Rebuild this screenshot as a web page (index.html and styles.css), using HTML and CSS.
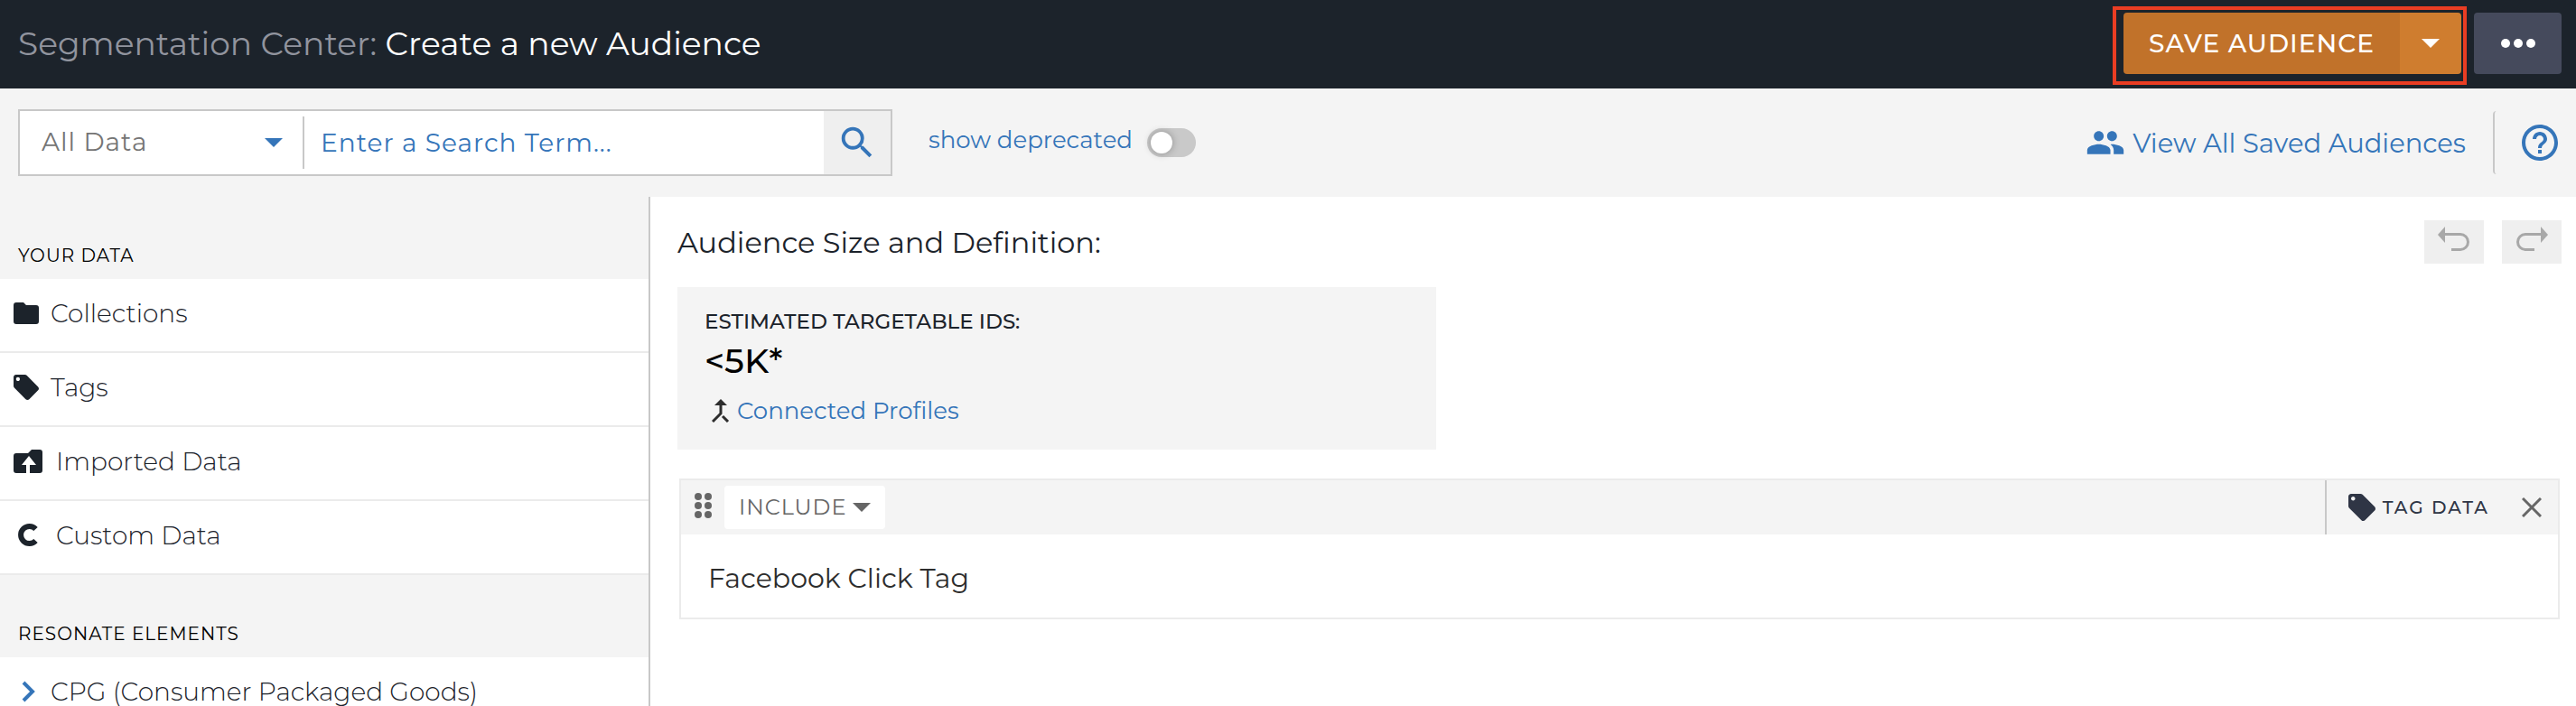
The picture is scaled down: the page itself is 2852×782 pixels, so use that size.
FILE: index.html
```html
<!DOCTYPE html>
<html lang="en">
  <head>
    <meta charset="utf-8">
    <title>Segmentation Center</title>
    <link rel="stylesheet" href="styles.css">
  </head>
  <body>
    <header class="topbar">
      <h1 class="title"><span>Segmentation Center:</span> Create a new Audience</h1>
      <div class="actions">
        <div class="highlight">
          <button class="save" type="button">SAVE AUDIENCE</button>
          <button class="saveMenu" type="button" aria-label="More save options">
            <svg width="20" height="10" viewBox="0 0 20 10"><path d="M0 0h20L10 10z"/></svg>
          </button>
        </div>
        <button class="more" type="button" aria-label="More">
          <svg width="38" height="10" viewBox="0 0 38 10"><circle cx="5" cy="5" r="5"/><circle cx="19" cy="5" r="5"/><circle cx="33" cy="5" r="5"/></svg>
        </button>
      </div>
    </header>

    <div class="toolbar">
      <form class="search">
        <div class="scope">
          <select aria-label="Search in">
            <option>All Data</option>
          </select>
          <svg width="20" height="10" viewBox="0 0 20 10"><path d="M0 0h20L10 10z"/></svg>
        </div>
        <input class="term" type="text" aria-label="Search term" placeholder="Enter a Search Term...">
        <button class="go" type="button" aria-label="Search">
          <svg width="46" height="46" viewBox="0 0 24 24"><path d="M15.5 14h-.79l-.28-.27A6.47 6.47 0 0 0 16 9.5 6.5 6.5 0 1 0 9.500 16c1.610 0 3.090-.590 4.230-1.570l.27.28v.79l5 4.990L20.490 19l-4.990-5zm-6 0C7.010 14 5 11.990 5 9.500S7.010 5 9.500 5 14 7.010 14 9.500 11.990 14 9.500 14z"/></svg>
        </button>
      </form>
      <label class="deprecated" for="deprecated">show deprecated</label>
      <input class="toggle" type="checkbox" id="deprecated">
      <a class="saved" href="#">
        <svg width="44" height="44" viewBox="0 0 24 24"><path d="M16 11c1.660 0 2.990-1.340 2.990-3S17.660 5 16 5s-3 1.340-3 3 1.340 3 3 3zm-8 0c1.660 0 2.990-1.340 2.990-3S9.660 5 8 5 5 6.340 5 8s1.340 3 3 3zm0 2c-2.330 0-7 1.170-7 3.500V19h14v-2.500c0-2.330-4.670-3.500-7-3.500zm8 0c-.29 0-.62.02-.97.05 1.160.84 1.970 1.970 1.970 3.450V19h6v-2.500c0-2.330-4.670-3.500-7-3.500z"/></svg>
        View All Saved Audiences
      </a>
      <a class="help" href="#" aria-label="Help">
        <svg width="48" height="48" viewBox="0 0 24 24"><path d="M11 18h2v-2h-2v2zm1-16C6.480 2 2 6.480 2 12s4.480 10 10 10 10-4.480 10-10S17.520 2 12 2zm0 18c-4.410 0-8-3.590-8-8s3.590-8 8-8 8 3.590 8 8-3.590 8-8 8zm0-14c-2.210 0-4 1.790-4 4h2c0-1.100.9-2 2-2s2 .9 2 2c0 2-3 1.750-3 5h2c0-2.250 3-2.500 3-5 0-2.210-1.790-4-4-4z"/></svg>
      </a>
    </div>

    <div class="page">
      <nav class="sidebar">
        <h2>YOUR DATA</h2>
        <ul>
          <li><a href="#">
            <svg width="28" height="24" viewBox="0 0 28 24"><path d="M3 0h8l3 3h11a3 3 0 0 1 3 3v15a3 3 0 0 1-3 3H3a3 3 0 0 1-3-3V3a3 3 0 0 1 3-3z"/></svg>
            Collections
          </a></li>
          <li><a href="#">
            <svg width="28" height="28" viewBox="2 2 20 20"><path d="M21.410 11.580l-9-9C12.050 2.220 11.550 2 11 2H4c-1.100 0-2 .9-2 2v7c0 .55.22 1.050.59 1.420l9 9c.36.36.86.58 1.410.58s1.050-.22 1.410-.59l7-7c.37-.36.59-.86.59-1.410s-.23-1.060-.59-1.420zM5.500 7C4.670 7 4 6.330 4 5.500S4.670 4 5.500 4 7 4.670 7 5.500 6.330 7 5.500 7z"/></svg>
            Tags
          </a></li>
          <li class="wide"><a href="#">
            <svg width="32" height="26" viewBox="0 0 32 26"><path d="M3 4h13l4-4h9a3 3 0 0 1 3 3v20a3 3 0 0 1-3 3H18V17h7l-8-10-8 10h5v9H3a3 3 0 0 1-3-3V7a3 3 0 0 1 3-3z"/></svg>
            Imported Data
          </a></li>
          <li class="wide"><a href="#">
            <svg width="32" height="26" viewBox="0 0 32 26"><path class="arc" d="M24.500 6A9.500 9.500 0 1 0 24.500 19"/></svg>
            Custom Data
          </a></li>
        </ul>
        <h2>RESONATE ELEMENTS</h2>
        <ul>
          <li><a href="#">
            <svg class="chevron" width="28" height="24" viewBox="0 0 28 24"><path d="M11 2l10 10-10 10"/></svg>
            CPG (Consumer Packaged Goods)
          </a></li>
        </ul>
      </nav>

      <main class="content">
        <div class="heading">
          <h2>Audience Size and Definition:</h2>
          <button type="button" aria-label="Undo" disabled>
            <svg width="36" height="28" viewBox="0 0 36 28"><path d="M0 9l8-9v18z"/><path class="line" d="M7 8.500h18a8 8 0 0 1 0 17H15"/></svg>
          </button>
          <button type="button" aria-label="Redo" disabled>
            <svg width="36" height="28" viewBox="0 0 36 28"><path d="M36 9l-8-9v18z"/><path class="line" d="M29 8.500H11a8 8 0 0 0 0 17h10"/></svg>
          </button>
        </div>

        <section class="estimate">
          <h3>ESTIMATED TARGETABLE IDS:</h3>
          <p class="size">&lt;5K*</p>
          <a href="#">
            <svg width="20" height="26" viewBox="0 0 20 26"><path class="tip" d="M10 0l7 7H3z"/><path d="M10 6v10L1 25M12 19l6 6"/></svg>
            Connected Profiles
          </a>
        </section>

        <section class="rule">
          <div class="ruleBar">
            <svg class="grip" width="20" height="28" viewBox="0 0 20 28"><circle cx="4" cy="4" r="4"/><circle cx="15" cy="4" r="4"/><circle cx="4" cy="14" r="4"/><circle cx="15" cy="14" r="4"/><circle cx="4" cy="24" r="4"/><circle cx="15" cy="24" r="4"/></svg>
            <div class="mode">
              <select aria-label="Rule mode">
                <option>INCLUDE</option>
              </select>
              <svg width="20" height="10" viewBox="0 0 20 10"><path d="M0 0h20L10 10z"/></svg>
            </div>
            <div class="source">
              <svg width="30" height="30" viewBox="2 2 20 20"><path d="M21.410 11.580l-9-9C12.050 2.220 11.550 2 11 2H4c-1.100 0-2 .9-2 2v7c0 .55.22 1.050.59 1.420l9 9c.36.36.86.58 1.410.58s1.050-.22 1.410-.59l7-7c.37-.36.59-.86.59-1.410s-.23-1.060-.59-1.420zM5.500 7C4.670 7 4 6.330 4 5.500S4.670 4 5.500 4 7 4.670 7 5.500 6.330 7 5.500 7z"/></svg>
              <span>TAG DATA</span>
              <button type="button" aria-label="Remove">
                <svg width="22" height="22" viewBox="0 0 22 22"><path d="M1 1l20 20M21 1L1 21"/></svg>
              </button>
            </div>
          </div>
          <p>Facebook Click Tag</p>
        </section>
      </main>
    </div>
  </body>
</html>
```
FILE: styles.css
```css
* {
    box-sizing: border-box;
}
body {
    margin: 0;
    min-height: 100vh;
    display: flex;
    flex-direction: column;
    background: #fff;
    color: #1c232b;
    font-family: Montserrat, Inter, sans-serif;
    font-size: 28px;
}
h1, h2, h3, p, ul {
    margin: 0;
    padding: 0;
    font-weight: 400;
}
ul {
    list-style: none;
}
a {
    color: #3575b9;
    text-decoration: none;
}
button, select, input {
    margin: 0;
    padding: 0;
    border: 0;
    font: inherit;
    color: inherit;
    letter-spacing: inherit;
}
select {
    appearance: none;
    background: none;
}
svg {
    display: block;
    flex: none;
    fill: currentColor;
}

/* top bar */
.topbar {
    display: flex;
    justify-content: space-between;
    align-items: flex-start;
    height: 98px;
    padding: 7px 16px 0 20px;
    background: #1c232b;
    color: #fff;
}
.title {
    font-size: 36px;
    line-height: 82px;
}
.title span {
    color: #91949e;
}
.actions {
    display: flex;
    gap: 8px;
}
.highlight {
    display: flex;
    height: 87px;
    padding: 3px 2px 8px 8px;
    border: 4px solid #ea3d23;
}
.save {
    width: 306px;
    border-radius: 4px 0 0 4px;
    background: #c1722a;
    font-weight: 500;
    letter-spacing: 1px;
}
.saveMenu {
    display: grid;
    place-items: center;
    width: 68px;
    border-radius: 0 4px 4px 0;
    background: #cf7d2f;
}
.more {
    display: grid;
    place-items: center;
    width: 97px;
    height: 68px;
    margin-top: 7px;
    border-radius: 4px;
    background: #454a5c;
}

/* search and links */
.toolbar {
    display: flex;
    align-items: center;
    height: 120px;
    padding: 0 16px 0 20px;
    background: #f4f4f4;
    color: #3575b9;
}
.search {
    display: flex;
    align-items: center;
    width: 968px;
    height: 74px;
    border: 2px solid #c8c8c8;
    background: #fff;
    letter-spacing: 1px;
}
.scope {
    display: flex;
    align-items: center;
    width: 315px;
    height: 58px;
    border-right: 2px solid #c8c8c8;
}
.scope select {
    width: 100%;
    height: 58px;
    padding: 0 0 2px 24px;
    color: #757575;
}
.scope svg, .mode svg {
    margin-left: -42px;
    pointer-events: none;
}
.term {
    flex: 1;
    min-width: 0;
    padding-left: 18px;
    background: none;
}
.term::placeholder {
    color: #3575b9;
    opacity: 1;
}
.go {
    display: grid;
    place-items: center;
    width: 74px;
    height: 70px;
    background: #efefef;
}
.deprecated {
    margin: 0 16px 6px 40px;
    font-size: 26px;
}
.toggle {
    appearance: none;
    width: 54px;
    height: 32px;
    padding: 4px;
    border-radius: 16px;
    background: #c9c9c9;
}
.toggle::before {
    content: "";
    display: block;
    width: 24px;
    height: 24px;
    border-radius: 50%;
    background: #fff;
    box-shadow: 0 0 8px rgba(0, 0, 0, 0.3);
}
.toggle:checked::before {
    margin-left: 22px;
}
.saved {
    display: flex;
    align-items: center;
    gap: 8px;
    margin-left: auto;
    padding-right: 30px;
    font-size: 29px;
}
.help {
    display: flex;
    align-items: center;
    height: 70px;
    padding-left: 26px;
    border-left: 2px solid #c8c8c8;
    border-radius: 4px 0 0 4px;
}

/* sidebar */
.page {
    display: flex;
    flex: 1;
}
.sidebar {
    flex: none;
    width: 720px;
    border-right: 2px solid #c8c8c8;
}
.sidebar h2 {
    height: 91px;
    padding: 53px 20px 0;
    background: #f4f4f4;
    color: #000;
    font-size: 20px;
    line-height: 24px;
    letter-spacing: 1px;
}
.sidebar a {
    display: flex;
    align-items: center;
    gap: 13px;
    height: 82px;
    padding: 0 16px 4px 15px;
    border-bottom: 2px solid #ebebeb;
    color: #1c232b;
    font-weight: 300;
}
.sidebar .wide a {
    gap: 15px;
}
.sidebar .arc {
    fill: none;
    stroke: currentColor;
    stroke-width: 6;
}
.sidebar .chevron {
    fill: none;
    stroke: #3575b9;
    stroke-width: 4;
}

/* audience */
.content {
    flex: 1;
    padding: 26px 16px 0 30px;
}
.heading {
    display: flex;
    align-items: center;
    gap: 20px;
    height: 48px;
    margin-bottom: 26px;
}
.heading h2 {
    flex: 1;
    font-size: 32px;
}
.heading button {
    width: 66px;
    height: 48px;
    padding: 7px 15px;
    background: #efefef;
    color: #a8a8a8;
}
.heading button svg {
    margin-top: -6px;
}
.heading .line {
    fill: none;
    stroke: currentColor;
    stroke-width: 3;
}
.estimate {
    width: 840px;
    height: 180px;
    padding: 25px 30px;
    background: #f4f4f4;
}
.estimate h3 {
    font-size: 23px;
    line-height: 26px;
    font-weight: 500;
}
.estimate .size {
    margin: 6px 0 10px;
    color: #000;
    font-size: 38px;
    line-height: 50px;
    font-weight: 500;
}
.estimate a {
    display: flex;
    align-items: center;
    gap: 8px;
    padding-left: 8px;
    font-size: 26px;
    line-height: 40px;
}
.estimate svg {
    fill: none;
    stroke: #2d2d2d;
    stroke-width: 3;
}
.estimate .tip {
    fill: #2d2d2d;
    stroke: none;
}
.rule {
    margin: 32px 2px 0;
    border: 2px solid #ebebeb;
}
.rule p {
    padding: 6px 30px 0;
    color: #2d2d2d;
    font-size: 30px;
    line-height: 86px;
}
.ruleBar {
    display: flex;
    align-items: center;
    height: 60px;
    padding-left: 15px;
    background: #f4f4f4;
    color: #666;
}
.grip {
    margin-bottom: 4px;
}
.mode {
    display: flex;
    align-items: center;
    width: 178px;
    height: 48px;
    margin-left: 13px;
    border-radius: 4px;
    background: #fff;
    font-size: 24px;
    letter-spacing: 1px;
}
.mode select {
    width: 100%;
    height: 48px;
    padding: 0 0 2px 16px;
}
.mode svg {
    margin-left: -36px;
}
.source {
    display: flex;
    align-items: center;
    gap: 8px;
    height: 60px;
    margin-left: auto;
    padding: 0 18px 0 24px;
    border-left: 2px solid #c8c8c8;
    color: #2f3545;
    font-size: 20px;
    font-weight: 500;
    letter-spacing: 2px;
}
.source button {
    margin-left: 28px;
    background: none;
}
.source button svg {
    stroke: #666;
    stroke-width: 3;
}
```
